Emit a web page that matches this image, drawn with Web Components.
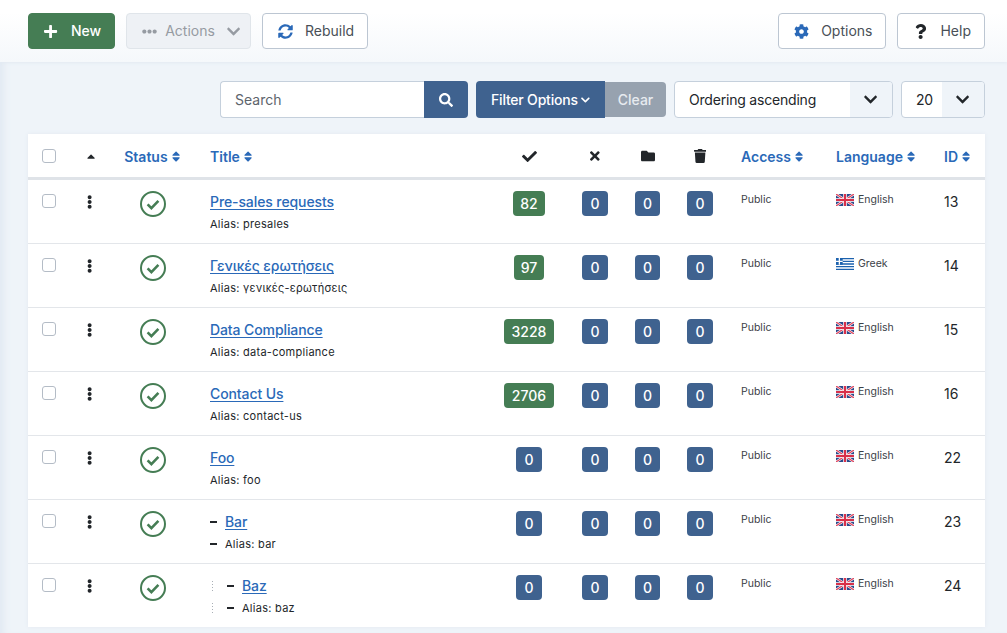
<!DOCTYPE html>
<html lang="en">
<head>
<meta charset="utf-8">
<title>Categories</title>
<style>
  html, body { margin: 0; height: 100%; overflow: hidden; }
  body {
    background: #eff4f9;
    font-family: Inter, "Noto Sans", sans-serif;
    font-size: 14px;
    color: #22262a;
  }
</style>
</head>
<body>
<list-page>
  <list-toolbar slot="toolbar">
    <tool-button variant="new" icon="plus">New</tool-button>
    <tool-button variant="disabled" icon="dots" caret>Actions</tool-button>
    <tool-button icon="sync">Rebuild</tool-button>
    <tool-button slot="end" icon="cog">Options</tool-button>
    <tool-button slot="end" icon="question" dark>Help</tool-button>
  </list-toolbar>
  <filter-bar slot="filters"></filter-bar>
  <list-table>
    <list-row alias="presales" count="82" language="English" flag="gb" item="13">Pre-sales requests</list-row>
    <list-row alias="γενικές-ερωτήσεις" count="97" language="Greek" flag="gr" item="14">Γενικές ερωτήσεις</list-row>
    <list-row alias="data-compliance" count="3228" language="English" flag="gb" item="15">Data Compliance</list-row>
    <list-row alias="contact-us" count="2706" language="English" flag="gb" item="16">Contact Us</list-row>
    <list-row alias="foo" count="0" language="English" flag="gb" item="22">Foo</list-row>
    <list-row alias="bar" count="0" language="English" flag="gb" item="23" level="1">Bar</list-row>
    <list-row alias="baz" count="0" language="English" flag="gb" item="24" level="2">Baz</list-row>
  </list-table>
</list-page>

<script>
const ICONS = {
  plus: ['0 0 448 512', 'M416 208H272V64c0-17.67-14.33-32-32-32h-32c-17.67 0-32 14.33-32 32v144H32c-17.67 0-32 14.33-32 32v32c0 17.67 14.33 32 32 32h144v144c0 17.67 14.33 32 32 32h32c17.67 0 32-14.33 32-32V304h144c17.67 0 32-14.33 32-32v-32c0-17.67-14.33-32-32-32z'],
  dots: ['0 0 512 512', 'M328 256c0 39.8-32.2 72-72 72s-72-32.2-72-72 32.2-72 72-72 72 32.2 72 72zm104-72c-39.8 0-72 32.2-72 72s32.2 72 72 72 72-32.2 72-72-32.2-72-72-72zm-352 0c-39.8 0-72 32.2-72 72s32.2 72 72 72 72-32.2 72-72-32.2-72-72-72z'],
  kebab: ['0 0 192 512', 'M96 184c39.8 0 72 32.2 72 72s-32.2 72-72 72-72-32.2-72-72 32.2-72 72-72zM24 80c0 39.8 32.2 72 72 72s72-32.2 72-72S135.8 8 96 8 24 40.2 24 80zm0 352c0 39.8 32.2 72 72 72s72-32.2 72-72-32.2-72-72-72-72 32.2-72 72z'],
  chevron: ['0 0 448 512', 'M207.029 381.476L12.686 187.132c-9.373-9.373-9.373-24.569 0-33.941l22.667-22.667c9.357-9.357 24.522-9.375 33.901-.04L224 284.505l154.745-154.021c9.379-9.335 24.544-9.317 33.901.04l22.667 22.667c9.373 9.373 9.373 24.569 0 33.941L240.971 381.476c-9.373 9.372-24.569 9.372-33.942 0z'],
  sync: ['0 0 512 512', 'M370.72 133.28C339.458 104.008 298.888 87.962 255.848 88c-77.458.068-144.328 53.178-162.791 126.85-1.344 5.363-6.122 9.15-11.651 9.15H24.103c-7.498 0-13.194-6.807-11.807-14.176C33.933 94.924 134.813 8 256 8c66.448 0 126.791 26.136 171.315 68.685L463.03 40.97C478.149 25.851 504 36.559 504 57.941V192c0 13.255-10.745 24-24 24H345.941c-21.382 0-32.09-25.851-16.971-40.971l41.75-41.749zM32 296h134.059c21.382 0 32.09 25.851 16.971 40.971l-41.75 41.75c31.262 29.273 71.835 45.319 114.876 45.28 77.418-.07 144.315-53.144 162.787-126.849 1.344-5.363 6.122-9.15 11.651-9.15h57.304c7.498 0 13.194 6.807 11.807 14.176C478.067 417.076 377.187 504 256 504c-66.448 0-126.791-26.136-171.315-68.685L48.97 471.03C33.851 486.149 8 475.441 8 454.059V320c0-13.255 10.745-24 24-24z'],
  cog: ['0 0 512 512', 'M487.4 315.7l-42.6-24.6c4.3-23.2 4.3-47 0-70.2l42.6-24.6c4.9-2.8 7.1-8.6 5.5-14-11.1-35.6-30-67.8-54.7-94.6-3.8-4.1-10-5.1-14.8-2.3L380.8 110c-17.9-15.4-38.5-27.3-60.8-35.1V25.8c0-5.6-3.9-10.5-9.4-11.7-36.7-8.2-74.3-7.8-109.2 0-5.5 1.2-9.4 6.1-9.4 11.7V75c-22.2 7.9-42.8 19.8-60.8 35.1L88.7 85.5c-4.9-2.8-11-1.9-14.8 2.3-24.7 26.7-43.6 58.9-54.7 94.6-1.7 5.4.6 11.2 5.5 14L67.3 221c-4.3 23.2-4.3 47 0 70.2l-42.6 24.6c-4.9 2.8-7.1 8.6-5.5 14 11.1 35.6 30 67.8 54.7 94.6 3.8 4.1 10 5.1 14.8 2.3l42.6-24.6c17.9 15.4 38.5 27.3 60.8 35.1v49.2c0 5.6 3.9 10.5 9.4 11.7 36.7 8.2 74.3 7.8 109.2 0 5.5-1.2 9.4-6.1 9.4-11.7v-49.2c22.2-7.9 42.8-19.8 60.8-35.1l42.6 24.6c4.9 2.8 11 1.9 14.8-2.3 24.7-26.7 43.6-58.9 54.7-94.6 1.5-5.5-.7-11.3-5.6-14.1zM256 336c-44.1 0-80-35.9-80-80s35.9-80 80-80 80 35.9 80 80-35.9 80-80 80z'],
  question: ['0 0 384 512', 'M202.021 0C122.202 0 70.503 32.703 29.914 91.026c-7.363 10.58-5.093 25.086 5.178 32.874l43.138 32.709c10.373 7.865 25.132 6.026 33.253-4.148 25.049-31.381 43.63-49.449 82.757-49.449 30.764 0 68.816 19.799 68.816 49.631 0 22.552-18.617 34.134-48.993 51.164-35.423 19.86-82.299 44.576-82.299 106.405V320c0 13.255 10.745 24 24 24h72.471c13.255 0 24-10.745 24-24v-5.773c0-42.86 125.268-44.645 125.268-160.627C377.504 66.256 286.902 0 202.021 0zM192 373.459c-38.196 0-69.271 31.075-69.271 69.271 0 38.195 31.075 69.27 69.271 69.27s69.271-31.075 69.271-69.271-31.075-69.27-69.271-69.27z'],
  search: ['0 0 512 512', 'M505 442.7L405.3 343c-4.5-4.5-10.6-7-17-7H372c27.6-35.3 44-79.7 44-128C416 93.1 322.9 0 208 0S0 93.1 0 208s93.1 208 208 208c48.3 0 92.7-16.4 128-44v16.3c0 6.4 2.5 12.5 7 17l99.7 99.7c9.4 9.4 24.6 9.4 33.9 0l28.3-28.3c9.4-9.4 9.4-24.6.1-34zM208 336c-70.7 0-128-57.2-128-128 0-70.7 57.2-128 128-128 70.7 0 128 57.2 128 128 0 70.7-57.2 128-128 128z'],
  check: ['0 0 512 512', 'M173.898 439.404l-166.4-166.4c-9.997-9.997-9.997-26.206 0-36.204l36.203-36.204c9.997-9.998 26.207-9.998 36.204 0L192 312.69 432.095 72.596c9.997-9.997 26.207-9.997 36.204 0l36.203 36.204c9.997 9.997 9.997 26.206 0 36.204l-294.4 294.401c-9.998 9.997-26.207 9.997-36.204-.001z'],
  times: ['0 0 352 512', 'M242.72 256l100.07-100.07c12.28-12.28 12.28-32.19 0-44.48l-22.24-22.24c-12.28-12.28-32.19-12.28-44.48 0L176 189.28 75.93 89.21c-12.28-12.28-32.19-12.28-44.48 0L9.21 111.45c-12.28 12.28-12.28 32.19 0 44.48L109.28 256 9.21 356.07c-12.28 12.28-12.28 32.19 0 44.48l22.24 22.24c12.28 12.28 32.2 12.28 44.48 0L176 322.72l100.07 100.07c12.28 12.28 32.2 12.28 44.48 0l22.24-22.24c12.28-12.28 12.28-32.19 0-44.48L242.72 256z'],
  folder: ['0 0 512 512', 'M464 128H272l-64-64H48C21.49 64 0 85.49 0 112v288c0 26.51 21.49 48 48 48h416c26.51 0 48-21.49 48-48V176c0-26.51-21.49-48-48-48z'],
  trash: ['0 0 448 512', 'M432 32H312l-9.4-18.7A24 24 0 0 0 281.1 0H166.8a23.72 23.72 0 0 0-21.4 13.3L136 32H16A16 16 0 0 0 0 48v32a16 16 0 0 0 16 16h416a16 16 0 0 0 16-16V48a16 16 0 0 0-16-16zM53.2 467a48 48 0 0 0 47.9 45h245.8a48 48 0 0 0 47.9-45L416 128H32z'],
  sort: ['0 0 320 512', 'M41 288h238c21.4 0 32.1 25.9 17 41L177 448c-9.4 9.4-24.6 9.4-33.9 0L24 329c-15.1-15.1-4.4-41 17-41zm255-105L177 64c-9.4-9.4-24.6-9.4-33.9 0L24 183c-15.1 15.1-4.4 41 17 41h238c21.4 0 32.1-25.9 17-41z'],
  sortUp: ['0 0 320 512', 'M279 224H41c-21.4 0-32.1-25.9-17-41L143 64c9.4-9.4 24.6-9.4 33.9 0l119 119c15.2 15.1 4.5 41-16.9 41z']
}

// width follows the viewBox, height is what the caller asks for
const icon = (name, h, color = 'currentColor') => {
  const [box, d] = ICONS[name]
  const [, , vw, vh] = box.split(' ').map(Number)
  return `<svg xmlns="http://www.w3.org/2000/svg" viewBox="${box}" width="${h * vw / vh}" height="${h}" fill="${color}" style="display:block;flex:none"><path d="${d}"/></svg>`
}

const FLAGS = {
  gb: `<svg xmlns="http://www.w3.org/2000/svg" viewBox="0 0 18 12" width="18" height="12" style="display:block;flex:none">
    <rect width="18" height="12" fill="#2b4a8b"/>
    <path d="M0 0L18 12M18 0L0 12" stroke="#fff" stroke-width="2.4"/>
    <path d="M0 0L18 12M18 0L0 12" stroke="#e0405a" stroke-width="1.2"/>
    <path d="M9 0V12M0 6H18" stroke="#fff" stroke-width="3.6"/>
    <path d="M9 0V12M0 6H18" stroke="#d8304a" stroke-width="2.2"/>
  </svg>`,
  gr: `<svg xmlns="http://www.w3.org/2000/svg" viewBox="0 0 18 12" width="18" height="12" style="display:block;flex:none">
    <rect width="18" height="12" fill="#fff"/>
    <path d="M0 .67H18M0 3.33H18M0 6H18M0 8.67H18M0 11.33H18" stroke="#1c62ae" stroke-width="1.33"/>
    <rect width="6.7" height="6.7" fill="#1c62ae"/>
    <path d="M3.35 0V6.7M0 3.35H6.7" stroke="#fff" stroke-width="1.3"/>
  </svg>`
}

const BOX = `
  .box {
    display: block;
    box-sizing: border-box;
    width: 14px;
    height: 14px;
    background: #fff;
    border: 1px solid #b4bcc6;
    border-radius: 3px;
  }
`

// columns shared by the head and the rows
const COLUMNS = '42px 40px 86px 294px 78px 54px 51px 54px 95px 108px 1fr'

class ListPage extends HTMLElement {
  constructor () {
    super()
    this.attachShadow({ mode: 'open' }).innerHTML = `
      <style>
        :host {
          display: block;
          height: 633px;
          box-sizing: border-box;
          box-shadow: inset 9px 0 9px -6px #dfe7f1;
        }
        main { padding: 0 22px 0 28px; }
      </style>
      <slot name="toolbar"></slot>
      <main>
        <slot name="filters"></slot>
        <slot></slot>
      </main>`
  }
}

class ListToolbar extends HTMLElement {
  constructor () {
    super()
    this.attachShadow({ mode: 'open' }).innerHTML = `
      <style>
        :host {
          display: flex;
          box-sizing: border-box;
          height: 62px;
          padding: 13px 22px 13px 28px;
          justify-content: space-between;
          background: linear-gradient(#fff 0, #fff 20%, #f5f8fb 100%);
          box-shadow: 0 1px 3px #e2e9f1;
        }
        div { display: flex; gap: 11px; }
      </style>
      <div><slot></slot></div>
      <div><slot name="end"></slot></div>`
  }
}

class ToolButton extends HTMLElement {
  constructor () {
    super()
    const variant = this.getAttribute('variant') || 'plain'
    const name = this.getAttribute('icon')
    const colors = { new: '#fff', disabled: '#969ba2', plain: this.hasAttribute('dark') ? '#22262a' : '#2a69b8' }
    const caret = this.hasAttribute('caret') ? `<span class="caret">${icon('chevron', 15, '#969ba2')}</span>` : ''
    this.attachShadow({ mode: 'open' }).innerHTML = `
      <style>
        :host {
          display: inline-flex;
          align-items: center;
          box-sizing: border-box;
          height: 36px;
          padding: 0 13px;
          gap: 11px;
          border-radius: 4px;
          border: 1px solid #bcc6d2;
          background: #fff;
          color: #495057;
          font-weight: 400;
          white-space: nowrap;
        }
        :host([variant="new"]) {
          background: #457d54;
          border-color: #457d54;
          color: #fff;
          font-weight: 500;
        }
        :host([variant="disabled"]) {
          background: #eef1f5;
          border-color: #e0e5ea;
          color: #969ba2;
          padding-right: 10px;
          gap: 7px;
        }
        .ico { width: 18px; display: flex; justify-content: center; }
        .label { margin-bottom: 2px; }
        .caret { margin-left: 5px; }
      </style>
      <span class="ico">${icon(name, 15, colors[variant])}</span>
      <span class="label"><slot></slot></span>
      ${caret}`
  }
}

class SelectBox extends HTMLElement {
  constructor () {
    super()
    this.attachShadow({ mode: 'open' }).innerHTML = `
      <style>
        :host {
          display: flex;
          box-sizing: border-box;
          height: 37px;
          border: 1px solid #c5d0dc;
          border-radius: 4px;
          background: #fff;
          overflow: hidden;
          color: #22262a;
        }
        .value { flex: 1; display: flex; align-items: center; padding-left: 14px; white-space: nowrap; letter-spacing: -.2px; }
        .arrow { display: flex; align-items: center; justify-content: center; background: #eff4f9; width: var(--arrow-w, 41px); }
      </style>
      <span class="value"><slot></slot></span>
      <span class="arrow">${icon('chevron', 15, '#22262a')}</span>`
  }
}

class FilterBar extends HTMLElement {
  constructor () {
    super()
    this.attachShadow({ mode: 'open' }).innerHTML = `
      <style>
        :host {
          display: flex;
          justify-content: flex-end;
          gap: 8px;
          padding: 19px 0 16px;
          height: 37px;
        }
        .search { display: flex; width: 248px; }
        .input {
          flex: 1;
          box-sizing: border-box;
          display: flex;
          align-items: center;
          padding-left: 14px;
          border: 1px solid #c5d0dc;
          border-right: 0;
          border-radius: 4px 0 0 4px;
          background: #fff;
          color: #5d646c;
        }
        .go {
          width: 44px;
          display: flex;
          align-items: center;
          justify-content: center;
          background: #3f628f;
          border-radius: 0 4px 4px 0;
        }
        .group { display: flex; }
        .filter, .clear {
          display: flex;
          align-items: center;
          color: #fff;
          white-space: nowrap;
          font-weight: 500;
          box-sizing: border-box;
        }
        .filter {
          width: 129px;
          gap: 3px;
          padding-left: 15px;
          background: #3f628f;
          border-radius: 4px 0 0 4px;
          letter-spacing: -.2px;
        }
        .clear {
          width: 61px;
          justify-content: center;
          background: #97a2af;
          color: #e7ebef;
          border-radius: 0 4px 4px 0;
          margin: 1px 0;
        }
        .ordering { width: 219px; --arrow-w: 42px; }
        .limit { width: 84px; --arrow-w: 42px; }
      </style>
      <div class="search">
        <div class="input">Search</div>
        <div class="go">${icon('search', 14, '#fff')}</div>
      </div>
      <div class="group">
        <div class="filter">Filter Options ${icon('chevron', 10, '#fff')}</div>
        <div class="clear">Clear</div>
      </div>
      <select-box class="ordering">Ordering ascending</select-box>
      <select-box class="limit">20</select-box>`
  }
}

class ListTable extends HTMLElement {
  constructor () {
    super()
    const sortable = (label) => `<span class="sort">${label}${icon('sort', 13, '#2a69b8')}</span>`
    this.attachShadow({ mode: 'open' }).innerHTML = `
      <style>
        ${BOX}
        :host {
          display: block;
          background: #fff;
          box-shadow: 0 0 4px #e3e9f1;
        }
        .head {
          display: grid;
          grid-template-columns: ${COLUMNS};
          align-items: center;
          height: 43px;
          border-bottom: 3px solid #dfe3e8;
          color: #2a69b8;
          font-weight: 600;
        }
        .mid { display: flex; justify-content: center; }
        .sort { display: flex; align-items: center; gap: 4px; white-space: nowrap; margin-top: 2px; }
        .pad { padding-left: 14px; }
        .up { margin: 8px 0 0 3px; }
        .glyph { margin-top: 1px; }
        .status { margin-right: 2px; }
      </style>
      <div class="head">
        <div class="mid"><span class="box"></span></div>
        <div class="mid up">${icon('sortUp', 13, '#22262a')}</div>
        <div class="mid status">${sortable('Status')}</div>
        <div class="pad">${sortable('Title')}</div>
        <div class="mid glyph">${icon('check', 15, '#22262a')}</div>
        <div class="mid glyph">${icon('times', 14, '#22262a')}</div>
        <div class="mid glyph">${icon('folder', 14, '#22262a')}</div>
        <div class="mid glyph">${icon('trash', 14, '#22262a')}</div>
        <div class="pad">${sortable('Access')}</div>
        <div class="pad">${sortable('Language')}</div>
        <div class="pad">${sortable('ID')}</div>
      </div>
      <slot></slot>`
  }
}

class CountBadge extends HTMLElement {
  constructor () {
    super()
    this.attachShadow({ mode: 'open' }).innerHTML = `
      <style>
        :host {
          display: inline-flex;
          align-items: center;
          justify-content: center;
          box-sizing: border-box;
          height: 25px;
          min-width: 25px;
          padding: 0 8px;
          border-radius: 4px;
          background: #3f628f;
          color: #fff;
          font-size: 14px;
          font-weight: 500;
        }
        :host([tone="green"]) { background: #457d54; }
        :host([compact]) { padding: 0 7px; }
      </style>
      <slot></slot>`
  }
}

class ListRow extends HTMLElement {
  constructor () {
    super()
    const a = (n) => this.getAttribute(n) || ''
    const level = Number(a('level') || 0)
    const count = a('count')
    const tree = level === 2 ? '<i class="gap"></i><b></b>' : level === 1 ? '<b></b>' : ''
    const zero = '<count-badge>0</count-badge>'
    this.attachShadow({ mode: 'open' }).innerHTML = `
      <style>
        ${BOX}
        :host {
          display: grid;
          grid-template-columns: ${COLUMNS};
          align-items: start;
          box-sizing: border-box;
          height: 64px;
          border-bottom: 1px solid #e3e6ea;
        }
        :host(:last-child) { border-bottom: 0; height: 63px; }
        .mid { display: flex; justify-content: center; }
        .check { padding-top: 14px; }
        .kebab { padding-top: 15px; }
        .status { padding-top: 11px; }
        .badge { padding-top: 11px; }
        .title { padding: 13px 0 0 14px; }
        .line { display: flex; align-items: center; height: 17px; }
        .line + .line { margin-top: 6px; font-size: 11px; letter-spacing: .27px; color: #22262a; height: 16px; }
        a { color: #2a69b8; font-weight: 500; letter-spacing: -.1px; text-decoration: underline; text-underline-offset: 2px; }
        b { display: block; width: 7px; height: 2px; background: #22262a; margin-right: 8px; flex: none; }
        i.gap {
          display: block;
          flex: none;
          width: 3px;
          height: 12px;
          margin: 0 13px 0 1px;
          background: radial-gradient(circle, #a9afb6 .7px, transparent .8px) 0 0 / 3px 3px repeat-y;
        }
        .small { padding: 13px 0 0 14px; font-size: 10.5px; color: #3c4147; line-height: 14px; }
        .lang { display: flex; gap: 4px; align-items: center; }
        .num { padding: 13px 0 0 14px; line-height: 17px; }
      </style>
      <div class="mid check"><span class="box"></span></div>
      <div class="mid kebab">${icon('kebab', 14, '#22262a')}</div>
      <div class="mid status">
        <svg xmlns="http://www.w3.org/2000/svg" width="26" height="26" viewBox="0 0 26 26" style="display:block">
          <circle cx="13" cy="13" r="12" fill="none" stroke="#457d54" stroke-width="2"/>
          <path d="M7.6 13.4l3.8 3.7 7-7.2" fill="none" stroke="#457d54" stroke-width="2.6"/>
        </svg>
      </div>
      <div class="title">
        <div class="line">${tree}<a href="#"><slot></slot></a></div>
        <div class="line">${tree}Alias: ${a('alias')}</div>
      </div>
      <div class="mid badge"><count-badge ${count !== '0' ? 'tone="green"' : ''} ${count.length === 2 ? 'compact' : ''}>${count}</count-badge></div>
      <div class="mid badge">${zero}</div>
      <div class="mid badge">${zero}</div>
      <div class="mid badge">${zero}</div>
      <div class="small">Public</div>
      <div class="small lang">${FLAGS[a('flag')]}${a('language')}</div>
      <div class="num">${a('item')}</div>`
  }
}

customElements.define('list-page', ListPage)
customElements.define('list-toolbar', ListToolbar)
customElements.define('tool-button', ToolButton)
customElements.define('select-box', SelectBox)
customElements.define('filter-bar', FilterBar)
customElements.define('list-table', ListTable)
customElements.define('count-badge', CountBadge)
customElements.define('list-row', ListRow)
</script>
</body>
</html>
